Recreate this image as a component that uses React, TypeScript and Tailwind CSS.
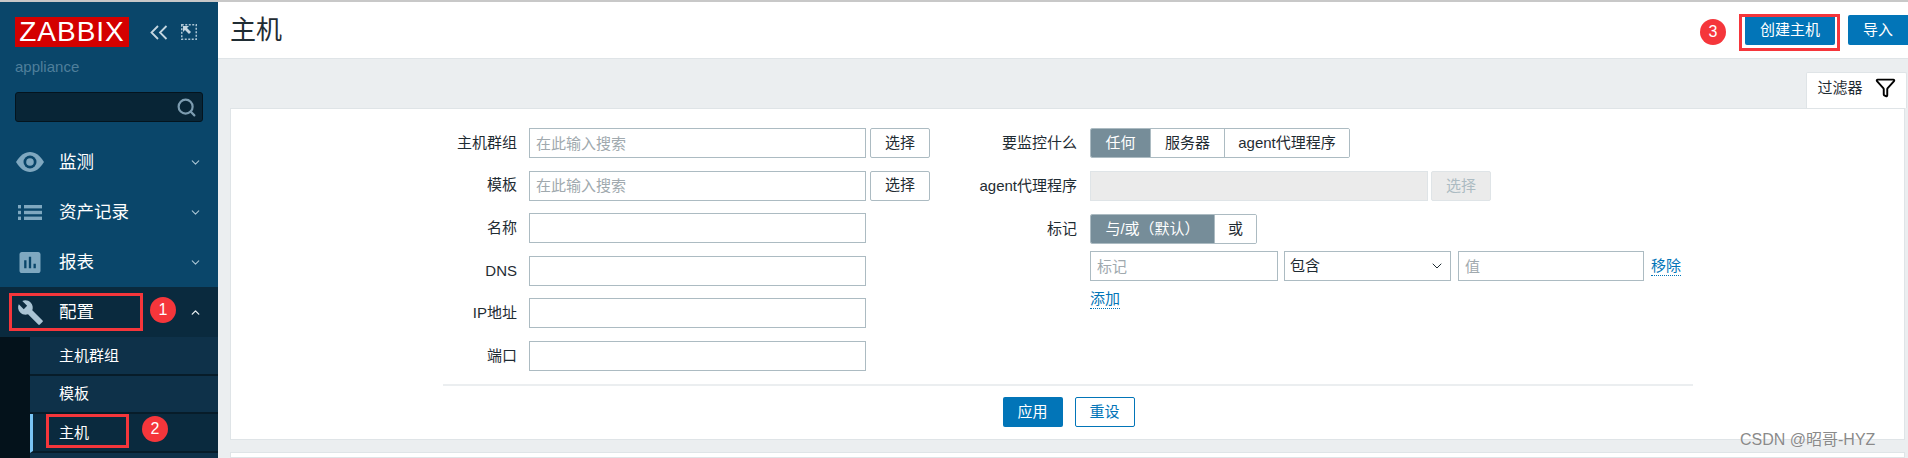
import React from "react";
import { ChevronDown, ChevronUp, Funnel, Search } from "lucide-react";
import { MdAssessment, MdBuild } from "react-icons/md";

const inputCls =
  "h-[30px] border border-[#acbbc2] bg-white px-[6px] text-[15px] text-[#1f2c33] placeholder:text-[#a0a9ae] outline-none rounded-none";
const selectBtn =
  "h-[30px] w-[60px] rounded-[2px] border border-[#acbbc2] bg-white text-[15px] text-[#1f2c33]";

function Badge({ n, cls }: { n: string; cls: string }) {
  return (
    <span className={"absolute flex h-[26px] w-[26px] items-center justify-center rounded-full bg-[#f5363b] text-[16px] text-white " + cls}>
      {n}
    </span>
  );
}

function ListIcon() {
  return (
    <svg width="24" height="15" viewBox="0 0 24 15" fill="#7fa8c0">
      <rect x="0" y="0" width="3" height="3.4" />
      <rect x="6" y="0" width="18" height="3.4" />
      <rect x="0" y="5.8" width="3" height="3.4" />
      <rect x="6" y="5.8" width="18" height="3.4" />
      <rect x="0" y="11.6" width="3" height="3.4" />
      <rect x="6" y="11.6" width="18" height="3.4" />
    </svg>
  );
}

function EyeIcon() {
  return (
    <svg width="28" height="20" viewBox="0 0 28 20">
      <path d="M0 10C4 3.5 8.5 0 14 0s10 3.5 14 10c-4 6.500-8.500 10-14 10S4 16.500 0 10z" fill="#7fa8c0" />
      <circle cx="14" cy="10" r="6.500" fill="#0a466a" />
      <circle cx="14" cy="10" r="3.800" fill="#7fa8c0" />
    </svg>
  );
}

function NavItem({ icon, label, open }: { icon: React.ReactNode; label: string; open?: boolean }) {
  return (
    <div className={"flex h-[50px] items-center pl-[16px] pr-[16px] " + (open ? "bg-[#0a2a3e]" : "")}>
      <span className="flex w-[28px] items-center justify-center">{icon}</span>
      <span className="ml-[15px] flex-1 text-[17.5px] text-white">{label}</span>
      {open ? (
        <ChevronUp size={13} strokeWidth={2.5} className="text-[#e8eef2]" />
      ) : (
        <ChevronDown size={13} strokeWidth={2} className="text-[#a9c4d4]" />
      )}
    </div>
  );
}

function SubItem({ label, active, h }: { label: string; active?: boolean; h: string }) {
  return (
    <div
      className={
        "flex items-center border-b-2 border-[#071c29] pt-[1px] text-[15px] text-white " +
        h +
        (active ? " border-l-[3px] border-l-[#79c5f5] bg-[#0a2a3e] pl-[26px]" : " bg-[#0e3149] pl-[29px]")
      }
    >
      {label}
    </div>
  );
}

function Row({ label, children }: { label: string; children: React.ReactNode }) {
  return (
    <div className="flex h-[30px] items-center">
      <label className="w-[286px] pr-0 text-right text-[15px] text-[#1f2c33]">{label}</label>
      <div className="ml-[12px] flex items-center gap-[4px]">{children}</div>
    </div>
  );
}

function RRow({ label, children }: { label?: string; children: React.ReactNode }) {
  return (
    <div className="flex items-center">
      <label className="w-[117px] text-right text-[15px] text-[#1f2c33]">{label}</label>
      <div className="ml-[13px] flex items-center">{children}</div>
    </div>
  );
}

function Seg({ items, widths }: { items: string[]; widths: string[] }) {
  return (
    <div className="flex h-[30px] overflow-hidden rounded-[2px] border border-[#acbbc2] text-[15px]">
      {items.map((t, i) => (
        <span
          key={t}
          className={
            "flex items-center justify-center " +
            widths[i] +
            (i === 0 ? " bg-[#768d99] text-white" : " border-l border-[#acbbc2] bg-white text-[#1f2c33]")
          }
        >
          {t}
        </span>
      ))}
    </div>
  );
}

export default function App() {
  return (
    <div className="relative flex h-[458px] w-[1908px] flex-col overflow-hidden bg-[#ebeef0] [font-family:'Liberation_Sans','Noto_Sans_CJK_SC',sans-serif]">
      <div className="h-[2px] bg-[#c8c8c8]" />
      <div className="flex flex-1">
        <aside className="flex w-[218px] flex-col bg-[#0a466a] pt-[15px]">
          <div className="flex items-center pl-[15px]">
            <div className="flex h-[30px] w-[114px] items-center justify-center bg-[#d40000] text-[28px] leading-none tracking-[1px] text-white">
              ZABBIX
            </div>
            <svg width="18" height="15" viewBox="0 0 18 15" fill="none" stroke="#c5d6e0" strokeWidth="1.800" className="ml-[21px]">
              <path d="M8 1 1.500 7.500 8 14M16.500 1 10 7.500 16.500 14" />
            </svg>
            <svg width="16" height="16" viewBox="0 0 16 16" className="ml-[13px]" fill="none">
              <rect x="0.750" y="0.750" width="14.500" height="14.500" stroke="#a9c4d4" strokeWidth="1.500" strokeDasharray="2 1.500" />
              <path d="M2 2h6L6 4l4 4-2 2-4-4-2 2z" fill="#c5d6e0" />
            </svg>
          </div>
          <div className="mt-[10px] pl-[15px] text-[15px] leading-[20px] text-[#4f7f9b]">appliance</div>
          <div className="mx-[15px] mt-[15px] flex h-[30px] items-center justify-end rounded-[3px] border border-[#04141e] bg-[#082536] pr-[5px]">
            <Search size={21} strokeWidth={2.500} className="text-[#7c9cb0]" />
          </div>
          <nav className="mt-[15px] flex flex-1 flex-col">
            <NavItem icon={<EyeIcon />} label="监测" />
            <NavItem icon={<ListIcon />} label="资产记录" />
            <NavItem icon={<MdAssessment size={29} color="#7fa8c0" />} label="报表" />
            <NavItem icon={<MdBuild size={27} color="#a9c4d4" />} label="配置" open />
            <div className="flex flex-1 bg-[#04121b] pl-[30px]">
              <div className="flex flex-1 flex-col bg-[#0e3149]">
                <SubItem label="主机群组" h="h-[39px]" />
                <SubItem label="模板" h="h-[38px]" />
                <SubItem label="主机" active h="h-[39px]" />
              </div>
            </div>
          </nav>
        </aside>

        <main className="flex flex-1 flex-col">
          <header className="flex h-[57px] items-center border-b border-[#dfe4e7] bg-white pl-[12px]">
            <h1 className="flex-1 text-[26px] font-normal text-[#1f2c33]">主机</h1>
            <button className="h-[30px] w-[90px] rounded-[2px] bg-[#0275b8] text-[15px] text-white">创建主机</button>
            <button className="ml-[13px] h-[30px] w-[60px] rounded-l-[2px] bg-[#0275b8] text-[15px] text-white">导入</button>
          </header>

          <div className="flex justify-end pr-[1px] pt-[13px]">
            <div className="flex h-[36px] w-[101px] items-start justify-center gap-[12px] rounded-t-[2px] border border-b-0 border-[#dfe4e7] bg-white pt-[4px] text-[15px] text-[#1f2c33]">
              过滤器
              <Funnel size={21} strokeWidth={2.200} className="text-black" />
            </div>
          </div>

          <section className="ml-[12px] mr-[3px] h-[332px] border border-[#dfe4e7] bg-white pt-[19px]">
            <div className="flex">
              <div className="flex w-[729px] flex-col gap-[12.600px]">
                <Row label="主机群组">
                  <input className={inputCls + " w-[337px]"} placeholder="在此输入搜索" />
                  <button className={selectBtn}>选择</button>
                </Row>
                <Row label="模板">
                  <input className={inputCls + " w-[337px]"} placeholder="在此输入搜索" />
                  <button className={selectBtn}>选择</button>
                </Row>
                <Row label="名称"><input className={inputCls + " w-[337px]"} /></Row>
                <Row label="DNS"><input className={inputCls + " w-[337px]"} /></Row>
                <Row label="IP地址"><input className={inputCls + " w-[337px]"} /></Row>
                <Row label="端口"><input className={inputCls + " w-[337px]"} /></Row>
              </div>
              <div className="flex flex-col">
                <RRow label="要监控什么">
                  <Seg items={["任何", "服务器", "agent代理程序"]} widths={["w-[59px]", "w-[74px]", "w-[125px]"]} />
                </RRow>
                <div className="mt-[13px]">
                  <RRow label="agent代理程序">
                    <div className="h-[30px] w-[338px] border border-[#dfe4e7] bg-[#ebebeb]" />
                    <div className="ml-[3px] flex h-[30px] w-[60px] items-center justify-center rounded-[2px] border border-[#dfe4e7] bg-[#ebebeb] text-[15px] text-[#acbbc2]">选择</div>
                  </RRow>
                </div>
                <div className="mt-[13px]">
                  <RRow label="标记">
                    <Seg items={["与/或（默认）", "或"]} widths={["w-[123px]", "w-[42px]"]} />
                  </RRow>
                </div>
                <div className="mt-[7px]">
                  <RRow>
                    <input className={inputCls + " w-[188px]"} placeholder="标记" />
                    <div className="relative ml-[6px] h-[30px] w-[167px]">
                      <select className="h-full w-full appearance-none rounded-none border border-[#acbbc2] bg-white pl-[5px] text-[15px] text-[#1f2c33]">
                        <option>包含</option>
                      </select>
                      <ChevronDown size={16} strokeWidth={1.500} className="pointer-events-none absolute right-[6px] top-[7px] text-[#1f2c33]" />
                    </div>
                    <input className={inputCls + " ml-[7px] w-[186px]"} placeholder="值" />
                    <a className="ml-[7px] border-b border-dotted border-[#0275b8] text-[15px] leading-[18px] text-[#0275b8]">移除</a>
                  </RRow>
                </div>
                <div className="mt-[6px] pl-[130px]">
                  <a className="inline-block border-b border-dotted border-[#0275b8] text-[15px] leading-[19px] text-[#0275b8]">添加</a>
                </div>
              </div>
            </div>
            <div className="mx-auto mt-[13px] flex w-[1250px] justify-center gap-[12px] border-t-2 border-[#ebeef0] pl-[2px] pt-[11px]">
              <button className="h-[30px] w-[60px] rounded-[2px] bg-[#0275b8] text-[15px] text-white">应用</button>
              <button className="h-[30px] w-[60px] rounded-[2px] border border-[#0275b8] bg-white text-[15px] text-[#0275b8]">重设</button>
            </div>
          </section>
          <div className="ml-[12px] mr-[3px] mt-[12px] flex-1 border border-[#dfe4e7] bg-white" />
        </main>
      </div>

      {/* annotations over the screenshot */}
      <div className="absolute left-[9px] top-[293px] h-[38px] w-[134px] border-[3px] border-[#f5363b]" />
      <div className="absolute left-[46px] top-[414px] h-[34px] w-[83px] border-[3px] border-[#f5363b]" />
      <div className="absolute left-[1739px] top-[14px] h-[37px] w-[101px] border-[3px] border-[#f5363b]" />
      <Badge n="1" cls="left-[150px] top-[297px]" />
      <Badge n="2" cls="left-[142px] top-[416px]" />
      <Badge n="3" cls="left-[1700px] top-[19px]" />
      <span className="absolute left-[1740px] top-[428px] text-[16px] text-[#8a8a8a] [text-shadow:0_0_1px_#fff]">CSDN @昭哥-HYZ</span>
    </div>
  );
}
